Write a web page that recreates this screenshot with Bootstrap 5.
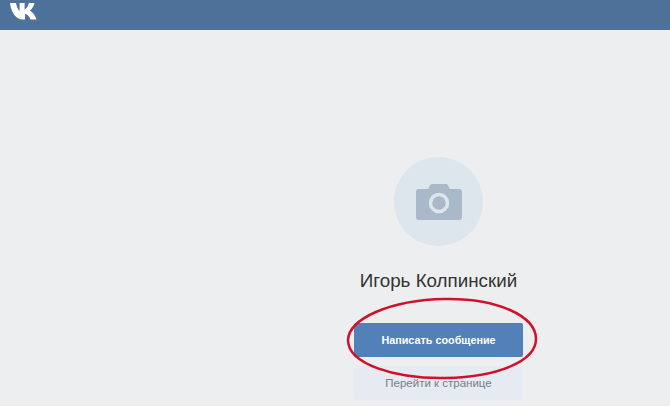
<!DOCTYPE html>
<html lang="ru">
<head>
  <meta charset="UTF-8">
  <title>Игорь Колпинский</title>
  <link rel="stylesheet" href="https://cdn.jsdelivr.net/npm/bootstrap@5.3.0/dist/css/bootstrap.min.css">
  <style>
    html, body { height: 100%; }
    body { background: #edeef0; font-family: "Liberation Sans", Arial, sans-serif; overflow: hidden; }
    .vk-head { height: 30px; background: #4e7199; padding: 2px 0 0 10px; }
    .vk-logo { width: 30px; height: 18px; display: block; }
    .profile-wrap { padding: 127px 147px 0 0; }
    .profile-col { width: 169px; }
    .avatar-circle { width: 89px; height: 89px; background: #dde5ed; }
    .user-name { font-size: 18.800px; line-height: 22px; color: #333; margin: 24px 0 31px; white-space: nowrap; }
    .btn-write, .btn-goto { height: 34px; width: 169px; line-height: 34px; padding: 0; border: 0; border-radius: 2px; }
    .btn-write { background: #5181b8; color: #fff; font-weight: 700; font-size: 10.800px; }
    .btn-goto { background: #e5ebf1; color: #75808c; margin-top: 9px; font-size: 11.500px; }
    .red-ring { position: absolute; left: 345px; top: 297px; width: 194px; height: 87px; pointer-events: none; }
  </style>
</head>
<body class="position-relative">

  <div class="vk-head">
    <svg class="vk-logo" viewBox="0 0 30 18">
      <path fill="#fff" d="M0 1h6c.6 3.400 2 6.600 3.600 8V1h5v6.400C16 6.800 18 4.500 19 1h5.500c-.8 3.500-2.700 6.200-4.500 7.700 2.300 1.300 5 4 6.500 8.800h-6c-1-3-3-5.200-5.500-5.500v5.500h-2C6.500 17.500 1.200 11.500 0 1z"/>
    </svg>
  </div>

  <div class="profile-wrap d-flex justify-content-end">
    <div class="profile-col d-flex flex-column align-items-center">
      <div class="avatar-circle rounded-circle d-flex align-items-center justify-content-center">
        <svg width="46" height="36" viewBox="0 0 46 36">
          <path fill="#a9b9ca" d="M3 5h9l3-5h16l3 5h9a3 3 0 0 1 3 3v25a3 3 0 0 1-3 3H3a3 3 0 0 1-3-3V8a3 3 0 0 1 3-3z"/>
          <circle cx="23" cy="19" r="8.500" fill="none" stroke="#dde5ed" stroke-width="3.500"/>
        </svg>
      </div>
      <div class="user-name">Игорь Колпинский</div>
      <button type="button" class="btn btn-write">Написать сообщение</button>
      <button type="button" class="btn btn-goto">Перейти к странице</button>
    </div>
  </div>

  <svg class="red-ring" viewBox="0 0 194 87">
    <path fill="none" stroke="#d0112b" stroke-width="2.500" d="M3 43C4 22 44 3 100 2c52-1 91 17 91 40 0 22-38 38-90 39C50 82 3 67 3 43z"/>
  </svg>

</body>
</html>
